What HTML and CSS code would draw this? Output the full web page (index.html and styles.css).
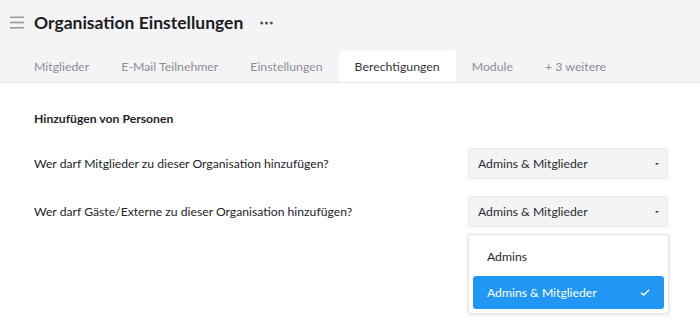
FILE: index.html
```html
<!DOCTYPE html>
<html lang="de">
<head>
  <meta charset="UTF-8" />
  <meta name="viewport" content="width=device-width, initial-scale=1.0" />
  <title>Organisation Einstellungen</title>
  <link rel="stylesheet" href="styles.css">
</head>
<body>
  <header class="page-header">
    <div class="title-row">
      <svg class="menu-icon" width="14" height="13" viewBox="0 0 14 13" aria-hidden="true">
        <rect x="0" y="0.5" width="14" height="1.6" fill="#9a9a9e" />
        <rect x="0" y="5.7" width="14" height="1.6" fill="#9a9a9e" />
        <rect x="0" y="11" width="14" height="1.6" fill="#9a9a9e" />
      </svg>
      <h1>Organisation Einstellungen</h1>
      <svg class="more-icon" width="13" height="4" viewBox="0 0 13 4" aria-hidden="true">
        <circle cx="1.7" cy="2" r="1.5" fill="#55555a" />
        <circle cx="6.5" cy="2" r="1.5" fill="#55555a" />
        <circle cx="11.3" cy="2" r="1.5" fill="#55555a" />
      </svg>
    </div>
    <nav class="tabs">
      <a class="tab">Mitglieder</a>
      <a class="tab">E-Mail Teilnehmer</a>
      <a class="tab">Einstellungen</a>
      <a class="tab active">Berechtigungen</a>
      <a class="tab">Module</a>
      <a class="tab">+ 3 weitere</a>
    </nav>
  </header>

  <main class="content">
    <h2>Hinzufügen von Personen</h2>

    <div class="setting-row">
      <span class="setting-label">Wer darf Mitglieder zu dieser Organisation hinzufügen?</span>
      <div class="select">
        <span>Admins &amp; Mitglieder</span>
        <span class="caret"></span>
      </div>
    </div>

    <div class="setting-row">
      <span class="setting-label">Wer darf Gäste/Externe zu dieser Organisation hinzufügen?</span>
      <div class="select-wrap">
        <div class="select">
          <span>Admins &amp; Mitglieder</span>
          <span class="caret"></span>
        </div>
        <ul class="dropdown">
          <li class="option">Admins</li>
          <li class="option selected">
            Admins &amp; Mitglieder
            <svg width="10" height="7" viewBox="0 0 10 7" aria-hidden="true">
              <path d="M1 3.8 L3.6 6 L9 1" fill="none" stroke="#fff" stroke-width="1.4" />
            </svg>
          </li>
        </ul>
      </div>
    </div>
  </main>
</body>
</html>
```

FILE: styles.css
```css
html,
body {
  min-height: 326px;
}

body {
  margin: 0;
  font-family: 'Lato', sans-serif;
  color: #24242a;
  background: #fff;
}

.page-header {
  background: #f4f4f6;
  border-bottom: 1px solid #e6e6ea;
}

.title-row {
  display: flex;
  align-items: center;
  height: 44px;
  padding: 0 10px;
}

.menu-icon {
  margin-right: 10px;
}

h1 {
  margin: 0;
  font-size: 17.5px;
  font-weight: 700;
  color: #1c1c22;
}

.more-icon {
  margin-left: 17px;
  margin-top: 2px;
}

.tabs {
  display: flex;
  padding: 6px 0 0 18px;
}

.tab {
  display: block;
  height: 32px;
  line-height: 33px;
  padding: 0 16px;
  font-size: 12.3px;
  color: #8e8e94;
  border-radius: 4px 4px 0 0;
}

.tab.active {
  background: #fff;
  color: #36363c;
}

.content {
  padding: 28px 32px 0 34px;
}

h2 {
  margin: 0 0 22px;
  font-size: 12.2px;
  font-weight: 700;
  color: #24242a;
}

.setting-row {
  display: flex;
  align-items: center;
  justify-content: space-between;
  margin-bottom: 17px;
  font-size: 12.2px;
}

.select-wrap {
  position: relative;
}

.select {
  display: flex;
  align-items: center;
  justify-content: space-between;
  box-sizing: border-box;
  width: 200px;
  height: 31px;
  padding: 0 8px 0 9px;
  background: #f4f4f6;
  border: 1px solid #e8e8ec;
  border-radius: 3px;
  font-size: 12.2px;
  color: #2a2a30;
}

.caret {
  width: 0;
  height: 0;
  border-left: 2.5px solid transparent;
  border-right: 2.5px solid transparent;
  border-top: 2.5px solid #333;
}

.dropdown {
  position: absolute;
  top: 38px;
  left: 0;
  box-sizing: border-box;
  width: 201px;
  margin: 0;
  padding: 4px;
  list-style: none;
  background: #fff;
  border: 1px solid #e4e4e8;
  border-radius: 3px;
  box-shadow: 0 1px 4px rgba(0, 0, 0, 0.12);
}

.option {
  display: flex;
  align-items: center;
  justify-content: space-between;
  height: 35px;
  padding: 0 14px;
  font-size: 12.2px;
  color: #24242a;
}

.option.selected {
  height: 33px;
  margin-top: 2px;
  background: #2196f3;
  color: #fff;
  border-radius: 3px;
}
```
